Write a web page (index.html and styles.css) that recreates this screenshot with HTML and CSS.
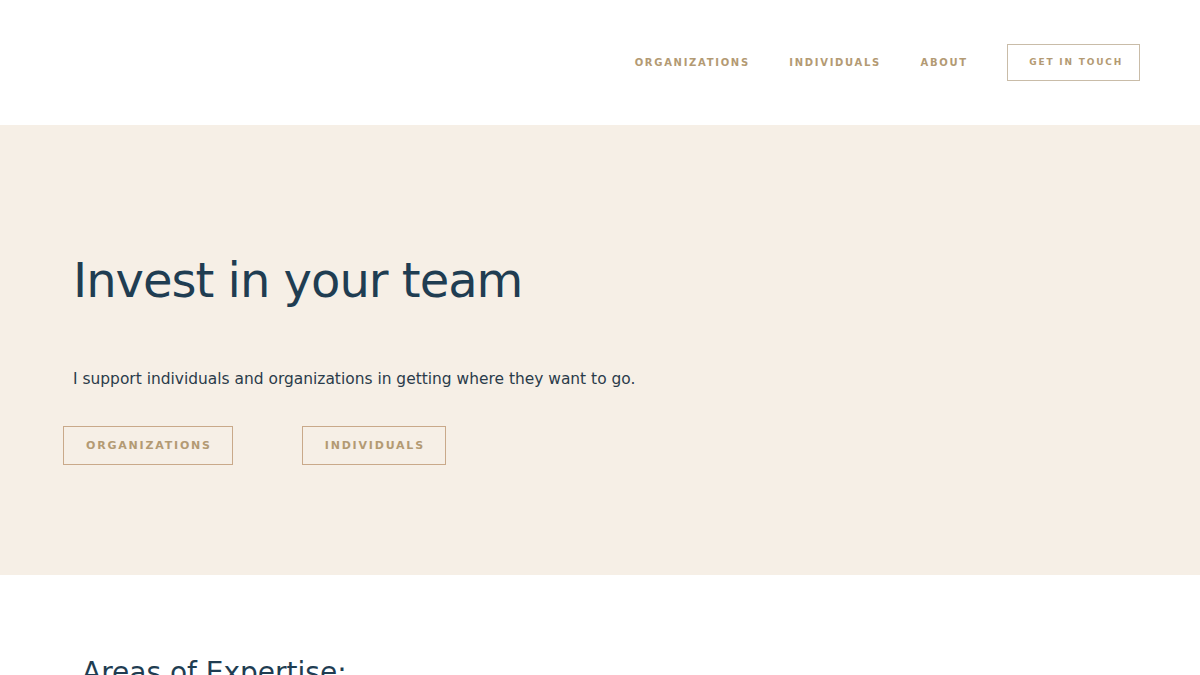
FILE: index.html
```html
<!DOCTYPE html>
<html lang="en">
<head>
<meta charset="utf-8">
<title>Invest in your team</title>
<link rel="stylesheet" href="styles.css">
</head>
<body>
<header class="site-header">
  <nav class="main-nav">
    <a class="nav-link" href="#">ORGANIZATIONS</a>
    <a class="nav-link" href="#">INDIVIDUALS</a>
    <a class="nav-link" href="#">ABOUT</a>
    <a class="nav-link nav-cta" href="#">GET IN TOUCH</a>
  </nav>
</header>
<section class="hero">
  <h1 class="hero-title">Invest in your team</h1>
  <p class="hero-text">I support individuals and organizations in getting where they want to go.</p>
  <div class="hero-actions">
    <a class="btn" href="#">ORGANIZATIONS</a>
    <a class="btn" href="#">INDIVIDUALS</a>
  </div>
</section>
<section class="expertise">
  <h2 class="section-title">Areas of Expertise:</h2>
</section>
</body>
</html>
```

FILE: styles.css
```css
* { box-sizing: border-box; }
html, body { margin: 0; padding: 0; }
body {
  font-family: "DejaVu Sans", "Liberation Sans", sans-serif;
  background: #ffffff;
  color: #1f3d52;
  overflow: hidden;
}
a { text-decoration: none; }

.site-header {
  height: 125px;
  display: flex;
  align-items: center;
  justify-content: flex-end;
  padding-right: 60px;
}
.main-nav {
  display: flex;
  align-items: center;
  gap: 39.5px;
}
.nav-link {
  font-size: 10px;
  font-weight: bold;
  letter-spacing: 1.7px;
  color: #b39a73;
  line-height: 12px;
}
.nav-cta {
  font-size: 9px;
  letter-spacing: 1.8px;
  line-height: 11px;
  border: 1px solid #c9bca8;
  padding: 12px 16px 12px 21px;
}

.hero {
  height: 450px;
  background: #f6efe6;
  padding: 126px 0 0 73px;
}
.hero-title {
  margin: 0;
  font-size: 48px;
  font-weight: normal;
  line-height: 58px;
  letter-spacing: -1px;
  color: #1f3d52;
}
.hero-text {
  margin: 58px 0 0;
  font-size: 15.45px;
  line-height: 24px;
  color: #2a3b4a;
}
.hero-actions {
  display: flex;
  gap: 69px;
  margin: 35px 0 0 -10px;
}
.btn {
  display: block;
  border: 1px solid #c9a98a;
  font-size: 11px;
  font-weight: bold;
  letter-spacing: 1.8px;
  line-height: 13px;
  color: #b39a73;
  padding: 12px 20px 12px 22px;
}

.expertise {
  padding: 81px 0 0 82px;
}
.section-title {
  margin: 0;
  font-size: 28px;
  font-weight: normal;
  line-height: 34px;
  color: #1f3d52;
}
```
